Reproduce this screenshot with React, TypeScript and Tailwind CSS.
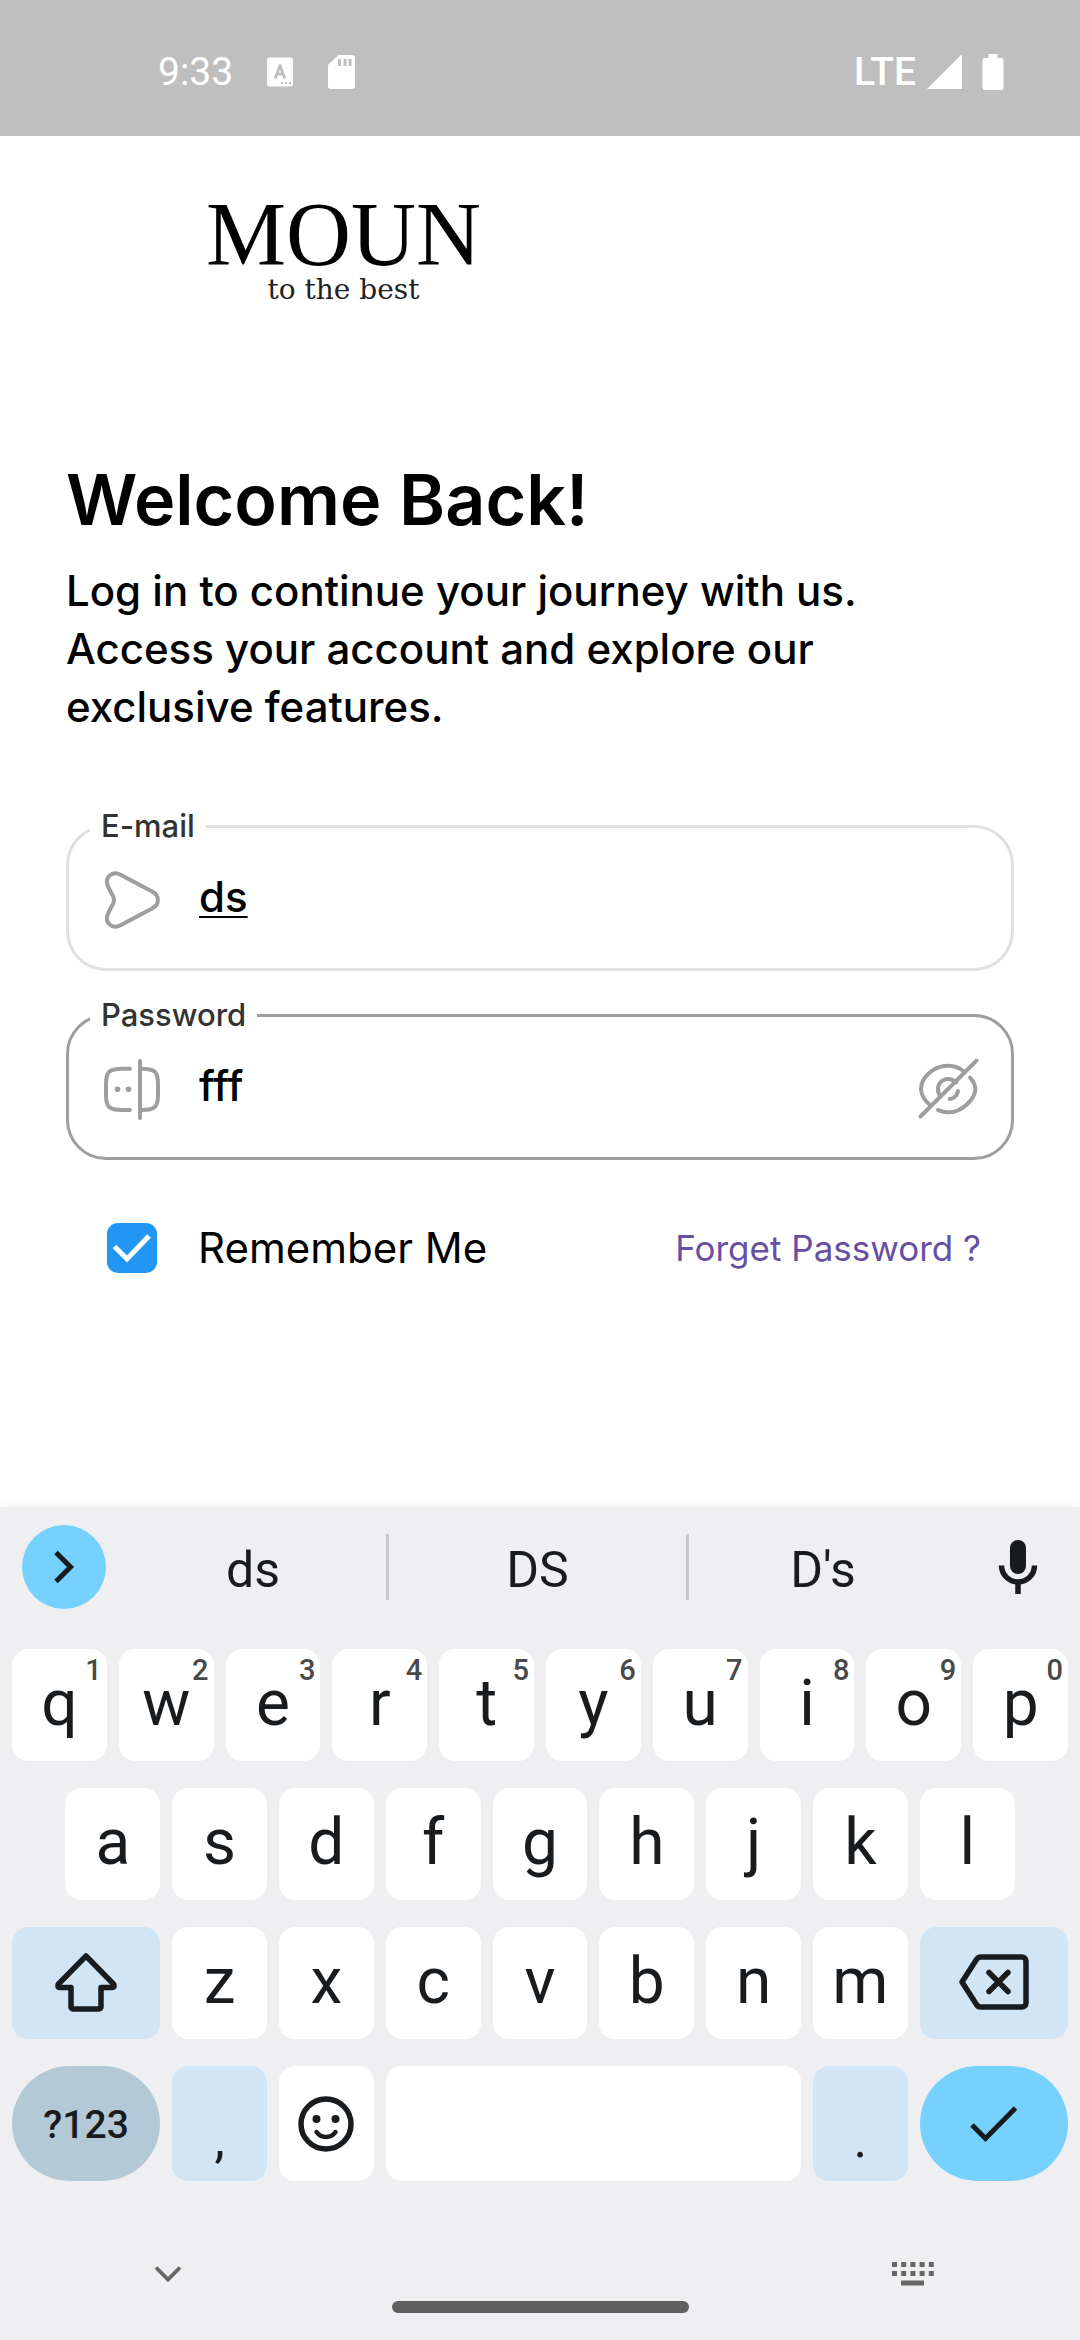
import { useState } from "react";
import type { ReactNode } from "react";

function StatusBar() {
  return (
    <header className="flex h-[136px] items-center justify-between bg-[#bfbfbf] pt-[7px] pr-[76px] pl-[158px] font-['Roboto',sans-serif] text-white">
      <div className="flex items-center">
        <span className="text-[39px] leading-[48px]">9:33</span>
        <svg className="ml-[33px]" width="28" height="30" viewBox="0 0 28 30" aria-hidden="true">
          <rect x="1" y="0.500" width="26" height="29" rx="3" fill="#fff" />
          <path d="M9.500 20.500 14 8.500l4.500 12M11 17h6" fill="none" stroke="#bfbfbf" strokeWidth="2.800" strokeLinecap="round" strokeLinejoin="round" />
          <path d="M15 26h2M19 26h2M23 26h2" stroke="#bfbfbf" strokeWidth="2" />
        </svg>
        <svg className="ml-[33px]" width="30" height="36" viewBox="0 0 30 36" aria-hidden="true">
          <path d="M11.500 1H25a3 3 0 0 1 3 3v28a3 3 0 0 1-3 3H4a3 3 0 0 1-3-3V11z" fill="#fff" />
          <path d="M12.500 5v7M18 5v7M23 5v7" stroke="#bfbfbf" strokeWidth="3" />
        </svg>
      </div>
      <div className="flex items-center">
        <span className="text-[39px] leading-[48px] font-medium">LTE</span>
        <svg className="ml-[11px]" width="36" height="36" viewBox="0 0 36 36" aria-hidden="true">
          <path d="M35 0v35H0z" fill="#fff" />
        </svg>
        <svg className="ml-[19px]" width="22" height="36" viewBox="0 0 22 36" aria-hidden="true">
          <path d="M6.500 0h9v4H19a2.500 2.500 0 0 1 2.500 2.500v27A2.500 2.500 0 0 1 19 36H3a2.500 2.500 0 0 1-2.500-2.500v-27A2.500 2.500 0 0 1 3 4h3.500z" fill="#fff" />
        </svg>
      </div>
    </header>
  );
}

function Logo() {
  return (
    <div className="flex pt-[60px] pl-[206px]">
      <div className="flex flex-col items-center">
        <span className="font-['Liberation_Serif',serif] text-[90px] leading-[78px] text-black">MOUN</span>
        <span className="font-['DejaVu_Serif',serif] text-[28px] leading-8 text-[#222]">to the best</span>
      </div>
    </div>
  );
}

function SendIcon() {
  return (
    <svg className="shrink-0" width="64" height="64" viewBox="0 0 64 64" fill="none" stroke="#9e9e9e" strokeWidth="4" strokeLinejoin="round" aria-hidden="true">
      <path d="M8.500 20.500C3.500 10.500 12 3 21 8l32 17c6.500 3.500 6.500 12.500 0 16L21 58C12 63 3.500 55.500 8.500 45.500L13 37q2-4 0-8z" />
    </svg>
  );
}

function PasswordIcon() {
  return (
    <svg className="shrink-0" width="64" height="64" viewBox="0 0 64 64" fill="none" stroke="#9e9e9e" strokeWidth="4" strokeLinecap="round" aria-hidden="true">
      <path d="M30 12.700h-8C9 12.700 6 16 6 28v11c0 12 3 15 16 15h8" />
      <path d="M40 12.700h2c13 0 16 3.300 16 15.300v11c0 12-3 15-16 15h-2M40 5v57" />
      <circle cx="17.500" cy="33.300" r="2.800" fill="#9e9e9e" stroke="none" />
      <circle cx="28.500" cy="33.300" r="2.800" fill="#9e9e9e" stroke="none" />
    </svg>
  );
}

function EyeSlashIcon() {
  return (
    <svg width="64" height="64" viewBox="0 0 64 64" fill="none" stroke="#9e9e9e" strokeWidth="4" strokeLinecap="round" aria-hidden="true">
      <path d="M4.500 60.500 60.500 4.700" />
      <path d="M14 49C9 45 5 38.500 5 33 5 22 17 9.700 32 9.700c6 0 12 2.300 16.500 6" />
      <path d="M54 21.500c4 4.500 5.300 8 5.300 11.500 0 10-13.300 23.300-27.300 23.300-3.500 0-7-.8-10-2.300" />
      <path d="M24.500 40c-2-2-2.500-4.500-2.500-7 0-5.500 4.500-10 10-10 3 0 6 1.500 8 3.500" />
      <path d="M42 35c-.5 4-4 7.500-8.200 8" />
    </svg>
  );
}

type FieldProps = {
  id: string;
  label: string;
  value: string;
  onChange: (value: string) => void;
  icon: ReactNode;
  borderClass: string;
  inputClass?: string;
  action?: ReactNode;
};

function Field({ id, label, value, onChange, icon, borderClass, inputClass = "", action }: FieldProps) {
  return (
    <fieldset className={"min-w-0 rounded-[40px] border-[3px] px-[31px] pb-4 " + borderClass}>
      <legend className="-ml-[10px] px-[11px] text-[31px] leading-10 font-medium text-[#333]">
        <label htmlFor={id}>{label}</label>
      </legend>
      <div className="flex h-[106px] items-center">
        {icon}
        <input
          id={id}
          type="text"
          value={value}
          onChange={(e) => onChange(e.target.value)}
          className={"ml-[35px] min-w-0 flex-1 bg-transparent pb-1 text-[42px] leading-[50px] font-medium text-black outline-none " + inputClass}
        />
        {action}
      </div>
    </fieldset>
  );
}

function LoginForm() {
  const [email, setEmail] = useState("ds");
  const [password, setPassword] = useState("fff");
  const [remember, setRemember] = useState(true);
  return (
    <main className="px-[66px] pt-[154px] font-['Inter',sans-serif]">
      <h1 className="text-[70px] leading-[80px] font-semibold text-black">Welcome Back!</h1>
      <p className="mt-[22px] text-[42px] leading-[58px] font-medium text-black">
        Log in to continue your journey with us.
        <br />
        Access your account and explore our
        <br />
        exclusive features.
      </p>
      <form className="mt-[70px] flex flex-col gap-6">
        <Field id="email" label="E-mail" value={email} onChange={setEmail} icon={<SendIcon />} borderClass="border-[#e0e0e0]" inputClass="underline decoration-2 underline-offset-4" />
        <Field
          id="password"
          label="Password"
          value={password}
          onChange={setPassword}
          icon={<PasswordIcon />}
          borderClass="border-[#9e9e9e]"
          action={
            <button type="button" aria-label="Hide password">
              <EyeSlashIcon />
            </button>
          }
        />
        <div className="mt-[39px] flex h-[50px] items-center justify-between pr-[33px] pl-[41px]">
          <label className="flex items-center gap-[41px] text-[42px] leading-[50px] text-black">
            <span className="relative flex size-[50px]">
              <input type="checkbox" checked={remember} onChange={(e) => setRemember(e.target.checked)} className="peer size-[50px] appearance-none rounded-[11px] border-4 border-[#2196f3] checked:bg-[#2196f3]" />
              <svg className="pointer-events-none absolute inset-0 hidden peer-checked:block" width="50" height="50" viewBox="0 0 50 50" fill="none" stroke="#fff" strokeWidth="5" aria-hidden="true">
                <path d="M7.500 23.500 20 36 42 13" />
              </svg>
            </span>
            Remember Me
          </label>
          <a href="#forgot" className="text-[35px] leading-[50px] text-[#6750a4]">
            Forget Password ?
          </a>
        </div>
      </form>
    </main>
  );
}

function SuggestionStrip() {
  return (
    <div className="flex items-center pt-[18px] pr-[39px] pl-[22px]">
      <button type="button" aria-label="Expand toolbar" className="flex size-[84px] items-center justify-center rounded-full bg-[#76d1ff]">
        <svg width="24" height="34" viewBox="0 0 24 34" fill="none" stroke="#191c1e" strokeWidth="5" aria-hidden="true">
          <path d="M4 2.500 18.500 17 4 31.500" />
        </svg>
      </button>
      <div className="ml-[14px] grid flex-1 grid-cols-[266fr_303fr_268fr] items-center text-[50px] leading-[60px] text-[#191c1e]">
        <button type="button" className="h-[66px] pt-[6px]">ds</button>
        <button type="button" className="h-[66px] border-x-[3px] border-[#c9c9cb] pt-[6px]">DS</button>
        <button type="button" className="h-[66px] pt-[6px]">D's</button>
      </div>
      <button type="button" aria-label="Voice input" className="ml-[38px]">
        <svg width="46" height="56" viewBox="0 0 46 56" aria-hidden="true">
          <rect x="15" y="1" width="16" height="34" rx="8" fill="#191c1e" />
          <path d="M6.500 26.500a16.500 16.500 0 0 0 33 0M23 43v12" fill="none" stroke="#191c1e" strokeWidth="5.500" />
        </svg>
      </button>
    </div>
  );
}

function Key({ children, className = "", hint, label }: { children?: ReactNode; className?: string; hint?: string; label?: string }) {
  return (
    <button type="button" aria-label={label} className={"relative col-span-2 flex h-[112px] items-center justify-center rounded-2xl pb-[2px] text-[64px] leading-none " + (className || "bg-white")}>
      {children}
      {hint && <span className="absolute top-[6px] right-[5px] text-[29px] leading-[30px] font-medium text-[#47494b]">{hint}</span>}
    </button>
  );
}

function Keyboard() {
  return (
    <section aria-label="Keyboard" className="mt-auto bg-[#efeff1] font-['Roboto',sans-serif] text-[#191c1e] shadow-[0_0_12px_rgba(0,0,0,0.08)]">
      <SuggestionStrip />
      <div className="mt-10 grid grid-cols-20 gap-x-3 gap-y-[27px] px-3">
        {"qwertyuiop".split("").map((k, i) => (
          <Key key={k} hint={String((i + 1) % 10)}>{k}</Key>
        ))}
        <span aria-hidden="true" />
        {"asdfghjkl".split("").map((k) => (
          <Key key={k}>{k}</Key>
        ))}
        <span aria-hidden="true" />
        <Key label="Shift" className="col-span-3 bg-[#d2e5f4]">
          <svg width="64" height="62" viewBox="0 0 64 62" fill="none" stroke="#191c1e" strokeWidth="5.500" strokeLinejoin="round" aria-hidden="true">
            <path d="M32 5 4.500 33c-1.500 1.500-.7 3.500 1.300 3.500H17v19.500a2 2 0 0 0 2 2h26a2 2 0 0 0 2-2V36.500h11.200c2 0 2.800-2 1.300-3.500z" />
          </svg>
        </Key>
        {"zxcvbnm".split("").map((k) => (
          <Key key={k}>{k}</Key>
        ))}
        <Key label="Backspace" className="col-span-3 bg-[#d2e5f4]">
          <svg width="72" height="56" viewBox="0 0 72 56" fill="none" stroke="#191c1e" strokeWidth="5.500" strokeLinejoin="round" aria-hidden="true">
            <path d="M4 28 18.500 5.500Q20 3 23 3H64a4 4 0 0 1 4 4v42a4 4 0 0 1-4 4H23q-3 0-4.500-2.500z" />
            <path d="m31 18.500 19 19M50 18.500l-19 19" strokeLinecap="round" />
          </svg>
        </Key>
        <button type="button" className="col-span-3 h-[115px] rounded-full bg-[#b4c9d6] pt-1 text-[39px] font-medium">?123</button>
        <button type="button" className="col-span-2 rounded-2xl bg-[#d2e5f4] pt-[32px] text-[52px] leading-none">,</button>
        <button type="button" aria-label="Emoji" className="col-span-2 flex items-center justify-center rounded-2xl bg-white">
          <svg width="58" height="58" viewBox="0 0 58 58" fill="none" stroke="#191c1e" strokeWidth="5.500" aria-hidden="true">
            <circle cx="29" cy="29" r="25" />
            <circle cx="19.500" cy="24" r="4" fill="#191c1e" stroke="none" />
            <circle cx="38.500" cy="24" r="4" fill="#191c1e" stroke="none" />
            <path d="M19.500 37c4.500 6.500 14.500 6.500 19 0" strokeWidth="4.500" strokeLinecap="round" />
          </svg>
        </button>
        <button type="button" aria-label="Space" className="col-span-8 rounded-2xl bg-white" />
        <button type="button" className="col-span-2 rounded-2xl bg-[#d2e5f4] pt-[32px] text-[52px] leading-none">.</button>
        <button type="button" aria-label="Done" className="col-span-3 flex items-center justify-center rounded-full bg-[#76d1ff]">
          <svg width="50" height="38" viewBox="0 0 50 38" fill="none" stroke="#191c1e" strokeWidth="5" aria-hidden="true">
            <path d="M3 20 16.500 33.500 46.500 3" />
          </svg>
        </button>
      </div>
      <div className="mt-[69px] flex h-[48px] items-center justify-between pr-[145px] pl-[153px]">
        <button type="button" aria-label="Close keyboard">
          <svg width="30" height="20" viewBox="0 0 30 20" fill="none" stroke="#666" strokeWidth="3.800" aria-hidden="true">
            <path d="M3 3.500 15 15.500 27 3.500" />
          </svg>
        </button>
        <button type="button" aria-label="Switch keyboard">
          <svg width="44" height="24" viewBox="0 0 44 24" fill="none" stroke="#666" aria-hidden="true">
            <path d="M1 2.500h43M1 11.500h43" strokeWidth="5" strokeDasharray="5 4.200" />
            <path d="M10 21h23" strokeWidth="5" />
          </svg>
        </button>
      </div>
      <div className="mx-auto mt-[3px] mb-[27px] h-3 w-[297px] rounded-full bg-[#606060]" />
    </section>
  );
}

export default function App() {
  return (
    <div className="flex min-h-screen flex-col bg-white">
      <StatusBar />
      <Logo />
      <LoginForm />
      <Keyboard />
    </div>
  );
}
